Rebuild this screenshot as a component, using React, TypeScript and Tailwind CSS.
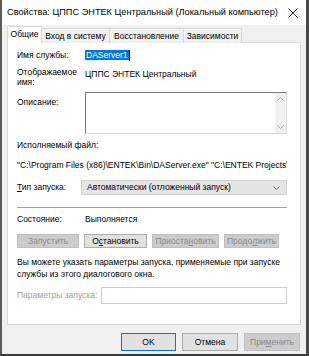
import React from 'react';

const font = { fontFamily: '"Liberation Sans", Arial, sans-serif' };

function Btn({ label, u, disabled, primary, w }: { label: string; u?: number; disabled?: boolean; primary?: boolean; w: string }) {
  const chars = label.split('');
  return (
    <div
      className={`${w} h-full flex items-center justify-center border text-[8.5px] leading-none whitespace-nowrap ${
        disabled
          ? 'bg-[#cccccc] border-[#bfbfbf] text-[#8a8a8a]'
          : primary
          ? 'bg-[#e1e1e1] border-[#0078d7] text-black'
          : 'bg-[#e1e1e1] border-[#adadad] text-black'
      }`}
    >
      {chars.map((c, i) => (
        <span key={i} className={i === u ? 'underline underline-offset-1' : ''}>
          {c}
        </span>
      ))}
    </div>
  );
}

export default function App() {
  return (
    <div style={font} className="w-[309px] h-[356px] bg-[#3a3a3a] flex flex-col overflow-hidden whitespace-nowrap">
      <div className="h-[354px] flex">
        <div className="w-[2px] bg-[#5a5a5a]" />
        <div className="w-[304px] bg-[#f0f0f0] flex flex-col">
          {/* title bar */}
          <div className="h-[25px] bg-white flex items-center justify-between pl-[5px] pr-[8px]">
            <span className="text-[9.2px] text-black leading-none">
              Свойства: ЦППС ЭНТЕК Центральный (Локальный компьютер)
            </span>
            <svg width="10" height="10" viewBox="0 0 10 10" className="mt-[1px]">
              <path d="M0.5 0.5L9.5 9.5M9.5 0.5L0.5 9.5" stroke="#222" strokeWidth="1" />
            </svg>
          </div>

          <div className="px-[5px] flex flex-col">
            {/* tabs */}
            <div className="h-[18px] flex items-end text-[8.5px] leading-none relative z-10">
              <div className="w-[35px] h-[17px] bg-white border border-b-0 border-[#d9d9d9] flex items-center justify-center pb-[1px]">
                Общие
              </div>
              <div className="w-[68px] h-[15px] bg-[#f0f0f0] border border-l-0 border-b-0 border-[#d9d9d9] flex items-center justify-center">
                Вход в систему
              </div>
              <div className="w-[74px] h-[15px] bg-[#f0f0f0] border border-l-0 border-b-0 border-[#d9d9d9] flex items-center justify-center">
                Восстановление
              </div>
              <div className="w-[58px] h-[15px] bg-[#f0f0f0] border border-l-0 border-b-0 border-[#d9d9d9] flex items-center justify-center">
                Зависимости
              </div>
            </div>

            {/* panel */}
            <div className="-mt-[1px] h-[283px] bg-white border border-[#d9d9d9] pl-[9px] pr-[13px] flex flex-col text-[8.5px] leading-[11px] text-black">
              <div className="mt-[7px] h-[10px] flex items-center">
                <span className="w-[68px]">Имя службы:</span>
                <span className="bg-[#0078d7] text-white px-[1px] h-[10px] flex items-center">DAServer1</span>
                <span className="w-[1px] h-[11px] bg-black" />
              </div>

              <div className="mt-[7px] flex">
                <span className="w-[68px] leading-[10px]">
                  Отображаемое
                  <br />
                  имя:
                </span>
                <span className="leading-[10px] mt-[2px]">ЦППС ЭНТЕК Центральный</span>
              </div>

              <div className="mt-[5px] flex">
                <span className="w-[68px] mt-[5px]">Описание:</span>
                <div className="flex-1 h-[42px] border border-[#7a7a7a] border-r-[#dcdcdc] border-b-[#dcdcdc] flex justify-end">
                  <div className="w-[11px] bg-[#f0f0f0] flex flex-col justify-between items-center py-[4px]">
                    <svg width="7" height="4" viewBox="0 0 7 4">
                      <path d="M0.5 3.5L3.5 0.5L6.5 3.5" stroke="#a0a0a0" fill="none" />
                    </svg>
                    <svg width="7" height="4" viewBox="0 0 7 4">
                      <path d="M0.5 0.5L3.5 3.5L6.5 0.5" stroke="#a0a0a0" fill="none" />
                    </svg>
                  </div>
                </div>
              </div>

              <div className="mt-[6px]">Исполняемый файл:</div>
              <div className="mt-[9px] overflow-hidden">
                "C:\Program Files (x86)\ENTEK\Bin\DAServer.exe" "C:\ENTEK Projects\Localsrv"
              </div>

              <div className="mt-[9px] flex items-center">
                <span className="w-[64px]">
                  <span className="underline underline-offset-1">Т</span>ип запуска:
                </span>
                <div className="flex-1 h-[15px] bg-[#e5e5e5] border border-[#cfcfcf] flex items-center justify-between pl-[5px] pr-[6px]">
                  <span>Автоматически (отложенный запуск)</span>
                  <svg width="7" height="4" viewBox="0 0 7 4">
                    <path d="M0.5 0.5L3.5 3.5L6.5 0.5" stroke="#606060" fill="none" />
                  </svg>
                </div>
              </div>

              <div className="mt-[12px] h-[1px] bg-[#a0a0a0]" />

              <div className="mt-[6px] flex">
                <span className="w-[68px]">Состояние:</span>
                <span>Выполняется</span>
              </div>

              <div className="mt-[9px] h-[14px] flex gap-[5px]">
                <Btn label="Запустить" disabled w="w-[62px]" />
                <Btn label="Остановить" u={1} w="w-[63px]" />
                <Btn label="Приостановить" u={7} disabled w="w-[67px]" />
                <Btn label="Продолжить" u={5} disabled w="w-[55px]" />
              </div>

              <div className="mt-[8px] leading-[12px]">
                Вы можете указать параметры запуска, применяемые при запуске
                <br />
                службы из этого диалогового окна.
              </div>

              <div className="mt-[7px] flex items-center">
                <span className="w-[84px] text-[#a0a0a0]">Параметры запуска:</span>
                <div className="flex-1 h-[17px] border border-[#cccccc]" />
              </div>
            </div>

            {/* footer */}
            <div className="mt-[8px] h-[18px] flex justify-end gap-[6px] pr-[1px]">
              <Btn label="OK" primary w="w-[55px]" />
              <Btn label="Отмена" w="w-[56px]" />
              <Btn label="Применить" u={3} disabled w="w-[56px]" />
            </div>
          </div>
        </div>
        <div className="w-[3px] bg-[#4a4a4a]" />
      </div>
    </div>
  );
}
